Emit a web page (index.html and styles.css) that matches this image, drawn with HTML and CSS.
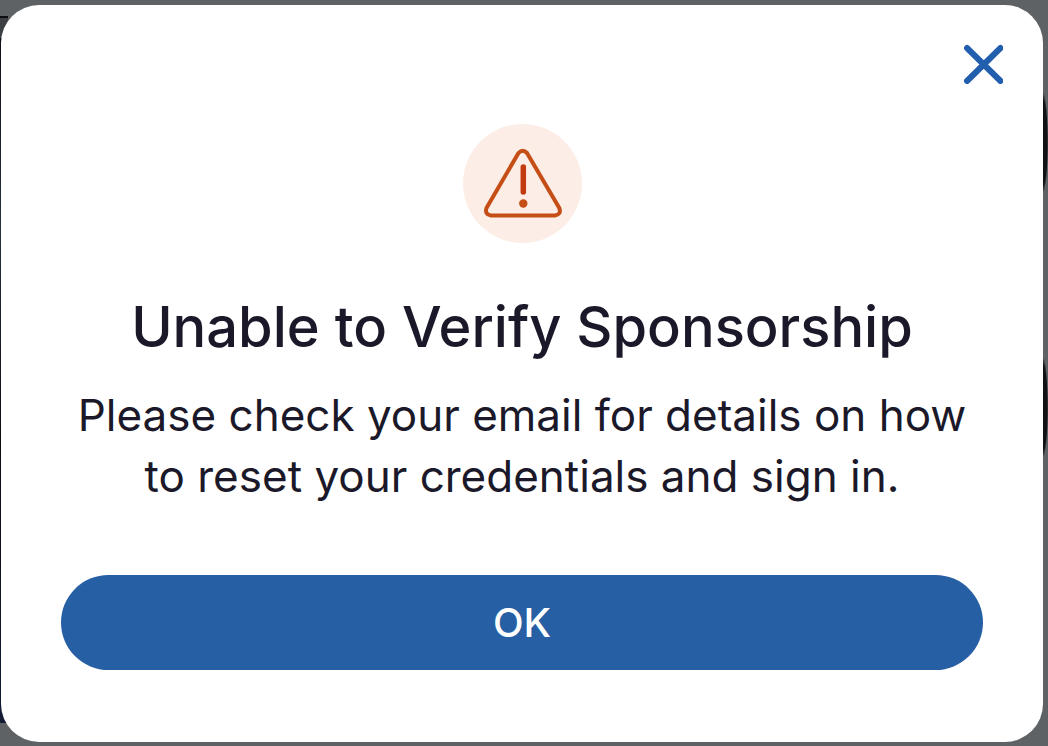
FILE: index.html
```html
<!DOCTYPE html>
<html lang="en">
<head>
  <meta charset="UTF-8">
  <meta name="viewport" content="width=device-width, initial-scale=1">
  <title>Unable to Verify Sponsorship</title>
  <link rel="stylesheet" href="styles.css">
</head>
<body>
  <div class="modal" role="dialog" aria-modal="true" aria-labelledby="modal-title">
    <div class="modal-header">
      <button type="button" class="close" aria-label="Close">
        <svg viewBox="0 0 40 40" fill="none" stroke="currentColor" stroke-width="6" stroke-linecap="round">
          <path d="M4 4l33.500 33M37.500 4L4 37"/>
        </svg>
      </button>
    </div>
    <div class="modal-body">
      <div class="icon">
        <svg viewBox="0 0 119 119" fill="none" stroke="#c54d16" stroke-linejoin="round" stroke-linecap="round">
          <path stroke-width="4" d="M55.500 29Q59.700 24.500 64 29L96.300 84Q98.500 90.500 92 91.500L28 91.500Q21.500 90.500 23.500 84Z"/>
          <path stroke="#c23a10" stroke-width="5.500" d="M60.300 43V68"/>
          <circle cx="60.300" cy="79.500" r="4.200" fill="#c54d16" stroke="none"/>
        </svg>
      </div>
      <h1 id="modal-title">Unable to Verify Sponsorship</h1>
      <p>Please check your email for details on how to reset your credentials and sign in.</p>
      <button type="button" class="ok">OK</button>
    </div>
  </div>
</body>
</html>
```
FILE: styles.css
```css
* {
  box-sizing: border-box;
}

body {
  margin: 0;
  padding: 5px 5px 4px 1px;
  min-height: 100vh;
  font-family: Inter, "Liberation Sans", sans-serif;
  color: #1b1929;
  /* dimmed page edges that show around the modal */
  background:
    radial-gradient(ellipse at left, #101214 60%, transparent 72%) right 93px / 5px 99px no-repeat,
    radial-gradient(ellipse at left, #101214 60%, transparent 72%) right 358px / 5px 99px no-repeat,
    linear-gradient(#3c3f44, #3c3f44) left 18px / 8px 20px no-repeat,
    linear-gradient(#0b0d12, #27303b 30%, #0b0d12 60%, #141b33) left 16px / 8px 707px no-repeat,
    #5f6265;
}

.modal {
  padding: 39px 40px 72px;
  border-radius: 38px;
  background: #fff;
}

.modal-header {
  display: flex;
  justify-content: flex-end;
}

.close {
  width: 40px;
  height: 40px;
  padding: 0;
  border: 0;
  background: none;
  color: #215fae;
  cursor: pointer;
}

.close svg,
.icon svg {
  display: block;
  width: 100%;
}

.modal-body {
  display: flex;
  flex-direction: column;
  align-items: center;
  padding: 40px 20px 0;
  text-align: center;
}

.icon {
  width: 119px;
  height: 119px;
  border-radius: 50%;
  background: #fcede6;
}

h1 {
  margin: 48px 0 22px;
  font-size: 56px;
  font-weight: 500;
  line-height: 72px;
}

p {
  margin: 0;
  font-size: 44px;
  line-height: 61px;
}

.ok {
  width: 100%;
  height: 95px;
  margin-top: 68px;
  border: 0;
  border-radius: 48px;
  background: #275fa5;
  color: #fff;
  font-family: inherit;
  font-size: 40px;
  font-weight: 500;
  cursor: pointer;
}
```
